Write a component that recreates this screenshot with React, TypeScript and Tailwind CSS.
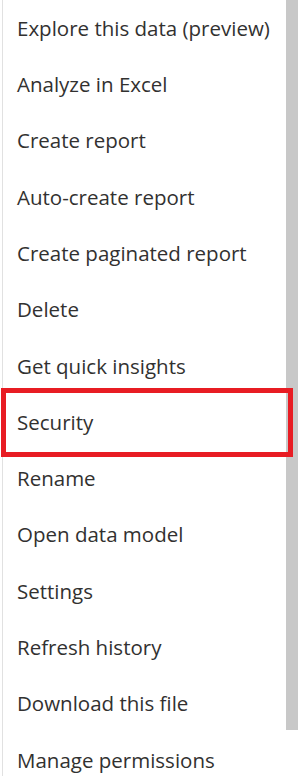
const items = [
  "Explore this data (preview)",
  "Analyze in Excel",
  "Create report",
  "Auto-create report",
  "Create paginated report",
  "Delete",
  "Get quick insights",
  "Security",
  "Rename",
  "Open data model",
  "Settings",
  "Refresh history",
  "Download this file",
  "Manage permissions",
];

export default function App() {
  return (
    <div className="relative h-[776px] w-[298px] overflow-hidden bg-white font-['Open_Sans',sans-serif]">
      <div className="ml-[2px] flex h-full border-l border-[#e1e1e1] pr-[12px]">
        <ul className="flex-1">
          {items.map((label) => (
            <li
              key={label}
              className="relative flex h-[56.3px] items-center pl-[14px] text-[20.5px] text-[#323130]"
            >
              {label}
              {label === "Security" && (
                <span className="absolute -bottom-[7px] -left-[2px] -right-[7px] -top-[6px] z-10 border-[5px] border-[#e81c23]" />
              )}
            </li>
          ))}
        </ul>
      </div>
      <div className="absolute right-0 top-0 h-[730px] w-[12px] bg-[#c8c8c8]" />
    </div>
  );
}
